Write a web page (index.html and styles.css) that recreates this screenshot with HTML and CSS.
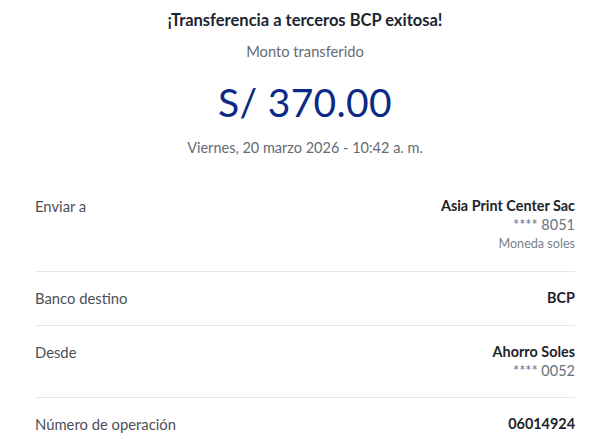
FILE: index.html
```html
<!DOCTYPE html>
<html lang="es">
<head>
<meta charset="utf-8">
<link rel="stylesheet" href="styles.css">
</head>
<body>
<main class="receipt">
  <header class="head">
    <h1 class="title">¡Transferencia a terceros BCP exitosa!</h1>
    <p class="subtitle">Monto transferido</p>
    <p class="amount">S/ 370.00</p>
    <p class="date">Viernes, 20 marzo 2026 - 10:42 a. m.</p>
  </header>
  <section class="rows">
    <div class="row">
      <span class="label">Enviar a</span>
      <div class="value">
        <span class="strong">Asia Print Center Sac</span>
        <span class="sub">**** 8051</span>
        <span class="small">Moneda soles</span>
      </div>
    </div>
    <div class="row">
      <span class="label">Banco destino</span>
      <div class="value"><span class="strong">BCP</span></div>
    </div>
    <div class="row">
      <span class="label">Desde</span>
      <div class="value">
        <span class="strong">Ahorro Soles</span>
        <span class="sub">**** 0052</span>
      </div>
    </div>
    <div class="row">
      <span class="label">Número de operación</span>
      <div class="value"><span class="strong">06014924</span></div>
    </div>
  </section>
</main>
</body>
</html>
```
FILE: styles.css
```css
html, body {
  margin: 0;
  padding: 0;
  background: #ffffff;
}
body {
  font-family: Lato, "Noto Sans", sans-serif;
  color: #1e2329;
}
.receipt {
  padding: 0 23px 0 35px;
}
.head {
  display: flex;
  flex-direction: column;
  align-items: center;
  padding-top: 8px;
}
.head p, .head h1 { margin: 0; }
.title {
  font-size: 16.5px;
  font-weight: 700;
  line-height: 24px;
  color: #1b2530;
}
.subtitle {
  margin-top: 9px !important;
  font-size: 14.7px;
  line-height: 20px;
  color: #636b75;
}
.amount {
  margin-top: 17px !important;
  font-size: 39px;
  line-height: 48px;
  color: #0b2a86;
  letter-spacing: 0.3px;
}
.date {
  margin-top: 12px !important;
  font-size: 14.5px;
  line-height: 20px;
  color: #636b75;
}
.rows {
  margin-top: 22px;
}
.row {
  display: flex;
  justify-content: space-between;
  align-items: flex-start;
  padding: 16px 0 17px;
  border-bottom: 1px solid #e6e8eb;
}
.label {
  font-size: 14.8px;
  line-height: 20px;
  color: #4a5058;
}
.value {
  display: flex;
  flex-direction: column;
  align-items: flex-end;
}
.strong {
  font-size: 14.4px;
  line-height: 20px;
  font-weight: 700;
  color: #1e2329;
}
.sub {
  font-size: 14.5px;
  line-height: 18px;
  color: #6a717b;
}
.small {
  font-size: 12.6px;
  line-height: 20px;
  color: #7a818a;
}
```
